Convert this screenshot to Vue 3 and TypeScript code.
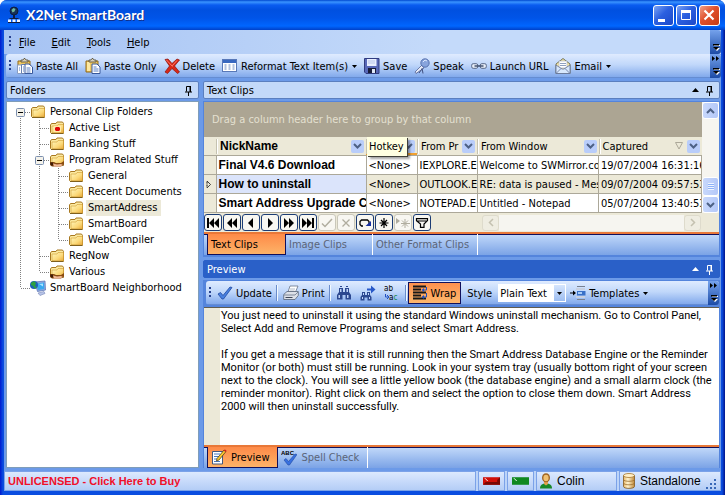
<script setup lang="ts">
import { ref } from 'vue'

type Guide = 'pipe' | 'tee' | 'end' | 'none' | 'open'
interface TreeRow {
  label: string
  icon: string
  guides: Guide[]
}
interface ToolItem {
  label: string
  icon: string
  menu?: boolean
}
interface Clip {
  name: string
  hotkey: string
  program: string
  source: string
  captured: string
}
interface NavButton {
  label: string
  icon: string
  disabled?: boolean
}

const menus: string[] = ['File', 'Edit', 'Tools', 'Help']

const tools: ToolItem[] = [
  { label: 'Paste All', icon: 'paste-all' },
  { label: 'Paste Only', icon: 'paste' },
  { label: 'Delete', icon: 'delete' },
  { label: 'Reformat Text Item(s)', icon: 'reformat', menu: true },
  { label: 'Save', icon: 'save' },
  { label: 'Speak', icon: 'speak' },
  { label: 'Launch URL', icon: 'link' },
  { label: 'Email', icon: 'email', menu: true },
]

const tree: TreeRow[] = [
  { label: 'Personal Clip Folders', icon: 'folder', guides: ['open'] },
  { label: 'Active List', icon: 'folder-active', guides: ['pipe', 'tee'] },
  { label: 'Banking Stuff', icon: 'folder', guides: ['pipe', 'tee'] },
  { label: 'Program Related Stuff', icon: 'folder-shared', guides: ['pipe', 'open'] },
  { label: 'General', icon: 'folder', guides: ['pipe', 'pipe', 'tee'] },
  { label: 'Recent Documents', icon: 'folder', guides: ['pipe', 'pipe', 'tee'] },
  { label: 'SmartAddress', icon: 'folder', guides: ['pipe', 'pipe', 'tee'] },
  { label: 'SmartBoard', icon: 'folder', guides: ['pipe', 'pipe', 'tee'] },
  { label: 'WebCompiler', icon: 'folder', guides: ['pipe', 'pipe', 'end'] },
  { label: 'RegNow', icon: 'folder', guides: ['pipe', 'tee'] },
  { label: 'Various', icon: 'folder-shared', guides: ['pipe', 'end'] },
  { label: 'SmartBoard Neighborhood', icon: 'network', guides: ['end'] },
]
const selectedFolder = ref('SmartAddress')

const clips: Clip[] = [
  { name: 'Final V4.6 Download', hotkey: '<None>', program: 'IEXPLORE.E', source: 'Welcome to SWMirror.co', captured: '19/07/2004 16:31:16' },
  { name: 'How to uninstall', hotkey: '<None>', program: 'OUTLOOK.E', source: 'RE: data is paused - Mes', captured: '09/07/2004 09:57:53' },
  { name: 'Smart Address Upgrade C', hotkey: '<None>', program: 'NOTEPAD.E', source: 'Untitled - Notepad', captured: '05/07/2004 13:40:53' },
]
const currentClip = ref(1)

const navButtons: NavButton[] = [
  { label: 'First', icon: 'nav-first' },
  { label: 'Previous page', icon: 'nav-prevpage' },
  { label: 'Previous', icon: 'nav-prev' },
  { label: 'Next', icon: 'nav-next' },
  { label: 'Next page', icon: 'nav-nextpage' },
  { label: 'Last', icon: 'nav-last' },
  { label: 'Post', icon: 'nav-post', disabled: true },
  { label: 'Cancel', icon: 'nav-cancel', disabled: true },
  { label: 'Refresh', icon: 'nav-refresh' },
  { label: 'Bookmark', icon: 'nav-star' },
  { label: 'Go to bookmark', icon: 'nav-goto', disabled: true },
  { label: 'Filter', icon: 'nav-filter' },
]

const wrap = ref(true)
const style = ref('Plain Text')
const body = ref(
  'You just need to uninstall it using the standard Windows uninstall mechanism. Go to Control Panel, Select Add and Remove Programs and select Smart Address.\n\n' +
    'If you get a message that it is still running then the Smart Address Database Engine or the Reminder Monitor (or both) must still be running. Look in your system tray (usually bottom right of your screen next to the clock). You will see a little yellow book (the database engine) and a small alarm clock (the reminder monitor). Right click on them and select the option to close them down. Smart Address 2000 will then uninstall successfully.',
)
</script>

<template>
  <svg class="sprite" aria-hidden="true">
    <defs>
      <linearGradient id="gFolder" x1="0" y1="0" x2="1" y2="1">
        <stop offset="0" stop-color="#fff8c0" />
        <stop offset="0.6" stop-color="#fbd878" />
        <stop offset="1" stop-color="#e8a838" />
      </linearGradient>
      <linearGradient id="gDb" x1="0" y1="0" x2="1" y2="0">
        <stop offset="0" stop-color="#e8b868" />
        <stop offset="0.4" stop-color="#fff4d0" />
        <stop offset="1" stop-color="#c08838" />
      </linearGradient>
    </defs>
    <symbol id="folder" viewBox="0 0 16 16">
      <path d="M1.500 12.500V5l1-1.500h4.500l1-1.500h5.500l1 1.500v9.500l-1 .5h-11z" fill="#fbe9a0" stroke="#a87820" />
      <path d="M3 12.500V6h5l1-1.500h5.500v8.500z" fill="url(#gFolder)" stroke="#d09a30" stroke-width=".6" />
      <path d="M2 13.500h12.500" stroke="#80601c" />
    </symbol>
    <symbol id="folder-active" viewBox="0 0 16 16">
      <use href="#folder" />
      <rect x="5" y="6" width="7" height="6" fill="#ffe9a8" />
      <path d="M7 7h3l1 1v2l-1 1h-3l-1-1v-2z" fill="#e00808" />
    </symbol>
    <symbol id="folder-shared" viewBox="0 0 16 16">
      <use href="#folder" />
      <path d="M1 10h4l2 1h5l3-2v3.500l-3 2H3l-2-1.500z" fill="#8a4c10" />
      <path d="M4 11.500l4 1 4-.5 2 1-3 1.500H5z" fill="#f0b898" />
      <path d="M1 10.500h3v3H2z" fill="#401c08" />
    </symbol>
    <symbol id="network" viewBox="0 0 16 16">
      <path d="M5 2l10-1 .5 9-8 1.500z" fill="#90a8e0" stroke="#6078b8" stroke-width=".8" />
      <path d="M7 3.500l7-1 .3 6.500-6.500 1z" fill="#38a8f0" />
      <path d="M9 4l4-.5v3z" fill="#a8e4ff" />
      <path d="M8 13l6-1.500 1 2-5 2z" fill="#b8c4e8" stroke="#7888b8" stroke-width=".6" />
      <circle cx="4" cy="5" r="4" fill="#1c60b8" />
      <path d="M1 3l3-2 2 2-1 3 2 1-2 2-2-3-2-1z" fill="#2ca040" />
    </symbol>
    <symbol id="paste" viewBox="0 0 16 16">
      <path d="M1 3h12v11H1z" fill="#f0c860" stroke="#906818" />
      <path d="M2 4h3v9H2z" fill="#fde8a0" />
      <path d="M4 4V2h2l1-1.500h1L9 2h2v2z" fill="#d8d0b8" stroke="#504830" stroke-width=".8" />
      <path d="M7 6h5l3 3v6.500H7z" fill="#fff" stroke="#38589c" />
      <path d="M8.500 9h3M8.500 11h5M8.500 13h5" stroke="#5880c8" />
    </symbol>
    <symbol id="paste-all" viewBox="0 0 16 16">
      <path d="M1 3h12v8H1z" fill="#f0c860" stroke="#906818" />
      <path d="M4 4V2h2l1-1.500h1L9 2h2v2z" fill="#d8d0b8" stroke="#504830" stroke-width=".8" />
      <path d="M.5 7h5v8.500h-5z" fill="#fff" stroke="#889cc0" />
      <path d="M4.500 6.500h5v9h-5z" fill="#fff" stroke="#6880b0" />
      <path d="M8 6h4l3.500 3v6.500H8z" fill="#fff" stroke="#38589c" />
      <path d="M9.500 10h4M9.500 12h4M9.500 14h4M6 9h1M6 11h1M6 13h1M2 10h1M2 12h1" stroke="#5880c8" />
    </symbol>
    <symbol id="delete" viewBox="0 0 16 16">
      <path d="M1 1.500l3-.5 4 4.500L13 1l2.500 1L10.500 8l5 6-2 1.500L8 10.500l-4.500 5L1 14l4.500-6z" fill="#d82818" stroke="#8c1008" stroke-width=".7" />
      <path d="M2.500 2l6 6.500M8 8l5-5.500" stroke="#ff8070" stroke-width=".9" fill="none" />
    </symbol>
    <symbol id="reformat" viewBox="0 0 16 16">
      <rect x=".5" y="1.500" width="14" height="12" fill="#fff" stroke="#5878b8" />
      <path d="M1 2h13v3H1z" fill="#3868c0" />
      <path d="M2.500 7h2M6.500 7h2M10.500 7h2M2.500 9h2M6.500 9h2M10.500 9h2M2.500 11h2M6.500 11h2M10.500 11h2" stroke="#6888c0" />
    </symbol>
    <symbol id="save" viewBox="0 0 16 16">
      <path d="M.5.500h14.500v15H2L.5 14z" fill="#5868b8" stroke="#303c80" />
      <path d="M3 1h9.500v7H3z" fill="#e8eeff" />
      <path d="M4 3h7M4 5h7" stroke="#b8c4e8" />
      <path d="M4 10h8v5H4z" fill="#181c38" />
      <path d="M8 11h3v4H8z" fill="#e0e8f8" />
    </symbol>
    <symbol id="speak" viewBox="0 0 16 16">
      <path d="M8 7L1 14l1 1.500L10 10z" fill="#e8ecf8" stroke="#506090" stroke-width=".8" />
      <path d="M8 10l1 5.500M5 15l3-4" stroke="#405080" fill="none" />
      <circle cx="11" cy="5" r="4.200" fill="#88a4dc" stroke="#4460a0" stroke-width=".8" />
      <path d="M9 4l2-2 2 1" stroke="#dce8ff" fill="none" />
    </symbol>
    <symbol id="link" viewBox="0 0 16 16">
      <rect x=".7" y="5.700" width="6" height="4.600" rx="1.500" fill="#e8eef8" stroke="#586888" />
      <rect x="9.300" y="5.700" width="6" height="4.600" rx="1.500" fill="#e8eef8" stroke="#586888" />
      <path d="M3.500 8h9" stroke="#384868" stroke-width="1.400" />
    </symbol>
    <symbol id="email" viewBox="0 0 16 16">
      <path d="M1 6l7-5.500L15 6v9.500H1z" fill="#f8e8a8" stroke="#686848" stroke-width=".9" />
      <path d="M4 3h8v7H4z" fill="#fff" stroke="#a0a8b8" stroke-width=".6" />
      <path d="M5 5.500h6M5 7.500h6" stroke="#90a0c0" />
      <path d="M1 7l6 4h2l6-4v8.500H1z" fill="#d8e8fc" stroke="#607098" stroke-width=".8" />
      <path d="M1.500 15L6 10.500M14.500 15L10 10.500" stroke="#607098" stroke-width=".8" />
    </symbol>
    <symbol id="check" viewBox="0 0 16 16">
      <path d="M1 9l2.500-1.500L6 10.500 13 2l2 .5L6.500 14H5z" fill="#4880e0" stroke="#2048a0" stroke-width=".8" />
    </symbol>
    <symbol id="print" viewBox="0 0 16 16">
      <path d="M5 7l2-6h8l-2.500 6z" fill="#fff" stroke="#687488" stroke-width=".8" />
      <path d="M7 4h5M6.500 6h5" stroke="#a0a8b8" stroke-width=".8" />
      <path d="M.7 9.500L4 6.500h11.300v4L12 14.500H.7z" fill="#dce0e8" stroke="#586478" stroke-width=".8" />
      <path d="M1 10h11l3-3" stroke="#687488" stroke-width=".8" fill="none" />
      <path d="M2.500 12.500h7" stroke="#404858" />
    </symbol>
    <symbol id="find" viewBox="0 0 16 16">
      <path d="M3 3h4v4h2V3h4v4l2 3v4.500h-5.500V10h-3v4.500H1V10l2-3z" fill="#2c4890" />
      <path d="M4 4h1.500v3H4zM10.500 4H12v3h-1.500zM2.500 10H4v3H2.500zM11 10h1.500v3H11z" fill="#c0d4f8" />
      <path d="M4 1.500h2M10 1.500h2" stroke="#2c4890" />
    </symbol>
    <symbol id="find-next" viewBox="0 0 16 16">
      <path d="M2 7h3v3h2V7h3v3l1.500 2v3.500H7.500V12.500H4.500v3H.5V12L2 10z" fill="#2c4890" />
      <path d="M3 8h1v2H3zM8 8h1v2H8zM2 12h1v2H2zM9 12h1v2H9z" fill="#c0d4f8" />
      <path d="M7 3.500h4V.500l4.500 4-4.500 4V5.500H7z" fill="#2858c8" />
    </symbol>
    <symbol id="wrap" viewBox="0 0 16 16">
      <path d="M1 1.500h13M1 4.500h8M1 7.500h13M1 10.500h8M1 13.500h13" stroke="#181818" stroke-width="2" />
      <path d="M14.500 2v3h-3M14.500 8v4h-3" stroke="#2050c0" fill="none" />
      <path d="M12 3v4l-2.500-2zM12 10v4l-2.500-2z" fill="#2050c0" />
    </symbol>
    <symbol id="templates" viewBox="0 0 16 16">
      <path d="M0 8h4" stroke="#000" />
      <path d="M3 5.500L6 8 3 10.500z" fill="#000" />
      <path d="M7 1.500h8M7 14.500h8" stroke="#788090" />
      <path d="M6 3h9v2H6zM6 11h9v2H6z" fill="#c8d0e0" />
      <path d="M7 6h8.500v4.500H7z" fill="#3870c8" />
      <path d="M8 7h4v2H8z" fill="#a8ccf8" />
    </symbol>
    <symbol id="note" viewBox="0 0 16 16">
      <path d="M1.500 2.500h10v12.500h-10z" fill="#fff" stroke="#405880" />
      <path d="M3 5h6M3 7.500h5M3 10h3M3 12.500h6" stroke="#4878c0" />
      <path d="M13 1l2 1.500L8 11l-2.500 1L6 9.500z" fill="#f8c830" stroke="#403010" stroke-width=".7" />
      <path d="M12.500 1.500l2 1.500 1-1.500-1.500-1z" fill="#d02020" />
    </symbol>
    <symbol id="person" viewBox="0 0 12 16">
      <path d="M0 15.500c0-3.500 2-5 6-5s6 1.500 6 5z" fill="#188828" />
      <path d="M4 8h4v3L6 12.500 4 11z" fill="#e0a050" />
      <ellipse cx="6" cy="4.800" rx="4" ry="4.500" fill="#a06420" />
      <ellipse cx="6" cy="5" rx="2.600" ry="3.200" fill="#f0c070" />
    </symbol>
    <symbol id="database" viewBox="0 0 12 16">
      <path d="M.5 2.500v11c0 2.500 11 2.500 11 0v-11z" fill="url(#gDb)" stroke="#805820" stroke-width=".8" />
      <ellipse cx="6" cy="2.500" rx="5.500" ry="2" fill="#fff0c8" stroke="#a87830" stroke-width=".8" />
      <path d="M.5 6.500c0 2.400 11 2.400 11 0M.5 10c0 2.400 11 2.400 11 0" stroke="#a07030" stroke-width=".8" fill="none" />
    </symbol>
    <symbol id="app-logo" viewBox="0 0 12 18">
      <circle cx="6" cy="5" r="4" fill="#183058" stroke="#0c1830" stroke-width=".8" />
      <path d="M3.500 4l2-2 2 1-1 2.500-2 1z" fill="#70b8a0" />
      <path d="M5 9h2v3H5zM1.500 12h9v1h-9z" fill="#101c40" />
      <path d="M0 13.500h3v2.500H0zM4.500 13.500h3v2.500h-3zM9 13.500h3v2.500H9z" fill="#f0f4ff" />
      <path d="M0 16.500h12" stroke="#101c40" />
    </symbol>
    <symbol id="pin" viewBox="0 0 9 11">
      <path d="M2.500 6.500v-5h4v5M1 7h7M4.500 7v4" fill="none" stroke="currentColor" />
      <path d="M5.500 1h1.500v6H5.500z" fill="currentColor" />
    </symbol>
    <symbol id="up" viewBox="0 0 7 4"><path d="M0 4L3.500 0 7 4z" fill="currentColor" /></symbol>
    <symbol id="down" viewBox="0 0 5 3"><path d="M0 0h5L2.500 3z" fill="currentColor" /></symbol>
    <symbol id="chev-down" viewBox="0 0 9 6"><path d="M1 1l3.500 3.500L8 1" fill="none" stroke="currentColor" stroke-width="2" /></symbol>
    <symbol id="chev-up" viewBox="0 0 9 6"><path d="M1 5l3.500-3.500L8 5" fill="none" stroke="currentColor" stroke-width="2" /></symbol>
    <symbol id="chev-left" viewBox="0 0 6 9"><path d="M5 1L1.500 4.500 5 8" fill="none" stroke="currentColor" stroke-width="1.500" /></symbol>
    <symbol id="chev-right" viewBox="0 0 6 9"><path d="M1 1l3.500 3.500L1 8" fill="none" stroke="currentColor" stroke-width="1.500" /></symbol>
    <symbol id="nav-first" viewBox="0 0 14 10"><path d="M1 0h2v10H1zM3 5l5-5v10zM8 5l5-5v10z" /></symbol>
    <symbol id="nav-prevpage" viewBox="0 0 14 10"><path d="M2 5l5-5v10zM7 5l5-5v10z" /></symbol>
    <symbol id="nav-prev" viewBox="0 0 14 10"><path d="M4 5l5-5v10z" /></symbol>
    <symbol id="nav-next" viewBox="0 0 14 10"><path d="M10 5L5 0v10z" /></symbol>
    <symbol id="nav-nextpage" viewBox="0 0 14 10"><path d="M7 5L2 0v10zM12 5L7 0v10z" /></symbol>
    <symbol id="nav-last" viewBox="0 0 14 10"><path d="M11 0h2v10h-2zM11 5L6 0v10zM6 5L1 0v10z" /></symbol>
    <symbol id="nav-post" viewBox="0 0 14 10"><path d="M2 5.500L5 8.500 12 1" fill="none" stroke="currentColor" stroke-width="1.500" /></symbol>
    <symbol id="nav-cancel" viewBox="0 0 14 10"><path d="M3.500 1.500l7 7M10.500 1.500l-7 7" fill="none" stroke="currentColor" stroke-width="1.300" /></symbol>
    <symbol id="nav-refresh" viewBox="0 0 14 10">
      <path d="M5 8H3.500L2 6.500v-3L3.500 2h6L11 3.500V6" fill="none" stroke="currentColor" stroke-width="1.300" />
      <path d="M7.500 8H13V3z" fill="#1830a0" />
    </symbol>
    <symbol id="nav-star" viewBox="0 0 14 10"><path d="M7 0v10M2.500 5h9M4 2l6 6M10 2L4 8" fill="none" stroke="currentColor" stroke-width="1.200" /></symbol>
    <symbol id="nav-goto" viewBox="0 0 14 10">
      <path d="M0 0l4 3-4 3z" />
      <path d="M9 1v9M5 5.500h9M6 2.500l6 6M12 2.500l-6 6" fill="none" stroke="currentColor" />
    </symbol>
    <symbol id="nav-filter" viewBox="0 0 14 10">
      <path d="M1.500.600h11v2L9 6v3.400H5.500V6l-4-3.400z M2 3h10" fill="none" stroke="currentColor" stroke-width="1.200" />
    </symbol>
    <symbol id="overflow" viewBox="0 0 8 8">
      <path d="M2 2h6v1H2zM2 5h6L5 8z" fill="#fff" />
      <path d="M1 1h6v1.500H1zM1 4h6L4 7z" fill="#000" />
    </symbol>
    <symbol id="more" viewBox="0 0 8 5"><path d="M0 0l3 2.500L0 5zM4 0l3 2.500L4 5z" /></symbol>
  </svg>

  <div class="window">
    <header class="titlebar">
      <svg class="app-icon"><use href="#app-logo" /></svg>
      <h1>X2Net SmartBoard</h1>
      <div class="controls">
        <button class="ctl" aria-label="Minimize"><svg viewBox="0 0 19 19"><path d="M4 13h7v3H4z" fill="#fff" /></svg></button>
        <button class="ctl" aria-label="Maximize">
          <svg viewBox="0 0 19 19"><path d="M4.500 5.500h9v8h-9z" fill="none" stroke="#fff" /><path d="M4 4h10v3H4z" fill="#fff" /></svg>
        </button>
        <button class="ctl close" aria-label="Close">
          <svg viewBox="0 0 19 19"><path d="M4.500 4.500l9 9M13.500 4.500l-9 9" stroke="#fff" stroke-width="2.200" /></svg>
        </button>
      </div>
    </header>

    <div class="client">
      <nav class="menubar" aria-label="Main menu">
        <span class="grip"></span>
        <button v-for="m in menus" :key="m" class="menu"><u>{{ m[0] }}</u>{{ m.slice(1) }}</button>
        <button class="overflow" aria-label="Menu options"><svg class="i-ovf"><use href="#overflow" /></svg></button>
      </nav>

      <div class="toolbar" role="toolbar" aria-label="Standard">
        <span class="grip"></span>
        <button v-for="t in tools" :key="t.label" class="tool">
          <svg class="icon"><use :href="'#' + t.icon" /></svg>
          <span>{{ t.label }}</span>
          <svg v-if="t.menu" class="i-down"><use href="#down" /></svg>
        </button>
        <button class="overflow" aria-label="Toolbar options">
          <svg class="i-more"><use href="#more" /></svg>
          <svg class="i-ovf"><use href="#overflow" /></svg>
        </button>
      </div>

      <main class="docks">
        <section class="dock">
          <div class="caption">
            <h2>Folders</h2>
            <button aria-label="Pin folders"><svg class="i-pin"><use href="#pin" /></svg></button>
          </div>
          <ul class="tree">
            <li v-for="row in tree" :key="row.label" class="tree-row" @click="selectedFolder = row.label">
              <svg v-for="(g, i) in row.guides" :key="i" class="guide" viewBox="0 0 19 16">
                <path v-if="g === 'pipe' || g === 'tee'" class="dots" d="M9.500 0v16" />
                <path v-if="g === 'end'" class="dots" d="M9.500 0v8" />
                <path v-if="g === 'open' && i > 0" class="dots" d="M9.500 0v16" />
                <path v-if="g === 'open' && i === 0" class="dots" d="M9.500 12v4" />
                <path v-if="g !== 'pipe'" class="dots" d="M10 8.500h9" />
                <g v-if="g === 'open'">
                  <rect x="5.500" y="4.500" width="8" height="8" rx="1" fill="#f4f2ea" stroke="#7b8fae" />
                  <path d="M7 8.500h5" stroke="#000" />
                </g>
              </svg>
              <svg class="icon"><use :href="'#' + row.icon" /></svg>
              <span class="tree-label" :class="{ selected: row.label === selectedFolder }">{{ row.label }}</span>
            </li>
          </ul>
        </section>

        <div class="column">
          <section class="dock">
            <div class="caption">
              <h2>Text Clips</h2>
              <button aria-label="Collapse clips"><svg class="i-up"><use href="#up" /></svg></button>
              <button aria-label="Pin clips"><svg class="i-pin"><use href="#pin" /></svg></button>
            </div>
            <div class="clips">
              <div class="grid-area">
                <div class="grid-main">
                  <div class="group-panel">Drag a column header here to group by that column</div>
                  <table class="grid">
                    <colgroup>
                      <col class="c-ind" /><col class="c-name" /><col class="c-hot" /><col class="c-prog" /><col /><col class="c-cap" />
                    </colgroup>
                    <thead>
                      <tr>
                        <th></th>
                        <th class="strong"><div class="th"><span>NickName</span><button class="drop" aria-label="Filter NickName"><svg class="i-chev"><use href="#chev-down" /></svg></button></div></th>
                        <th class="hot">
                          <div class="th end"><button class="drop" aria-label="Filter Hotkey"><svg class="i-chev"><use href="#chev-down" /></svg></button></div>
                          <span class="tip">Hotkey</span>
                        </th>
                        <th><div class="th"><span>From Pr</span><button class="drop" aria-label="Filter From Program"><svg class="i-chev"><use href="#chev-down" /></svg></button></div></th>
                        <th><div class="th"><span>From Window</span><button class="drop" aria-label="Filter From Window"><svg class="i-chev"><use href="#chev-down" /></svg></button></div></th>
                        <th>
                          <div class="th">
                            <span>Captured</span>
                            <svg class="i-sort" viewBox="0 0 8 8"><path d="M.5.500h7L4 7z" fill="none" stroke="#aca899" /></svg>
                            <button class="drop" aria-label="Filter Captured"><svg class="i-chev"><use href="#chev-down" /></svg></button>
                          </div>
                        </th>
                      </tr>
                    </thead>
                    <tbody>
                      <tr v-for="(c, i) in clips" :key="c.name" :class="{ current: i === currentClip }" @click="currentClip = i">
                        <td class="ind">
                          <svg v-if="i === currentClip" class="i-cur" viewBox="0 0 6 9"><path d="M1 1l3.500 3.500L1 8z" fill="none" stroke="#000" stroke-dasharray="1 .5" /></svg>
                        </td>
                        <td class="strong">{{ c.name }}</td>
                        <td>{{ c.hotkey }}</td>
                        <td>{{ c.program }}</td>
                        <td>{{ c.source }}</td>
                        <td>{{ c.captured }}</td>
                      </tr>
                    </tbody>
                  </table>
                </div>
                <div class="vscroll">
                  <button class="sb" aria-label="Scroll up"><svg class="i-chev"><use href="#chev-up" /></svg></button>
                  <span class="track"></span>
                  <span class="sb thumb"></span>
                  <button class="sb" aria-label="Scroll down"><svg class="i-chev"><use href="#chev-down" /></svg></button>
                </div>
              </div>
              <div class="navigator">
                <button v-for="n in navButtons" :key="n.icon" class="nav" :disabled="n.disabled" :aria-label="n.label">
                  <svg class="i-nav"><use :href="'#' + n.icon" /></svg>
                </button>
                <div class="hscroll">
                  <button class="sb off" disabled aria-label="Scroll left"><svg class="i-side"><use href="#chev-left" /></svg></button>
                  <span class="track"></span>
                  <button class="sb off" disabled aria-label="Scroll right"><svg class="i-side"><use href="#chev-right" /></svg></button>
                </div>
              </div>
              <div class="tabs" role="tablist">
                <button class="tab active wide" role="tab" aria-selected="true">Text Clips</button>
                <button class="tab wide" role="tab" aria-selected="false">Image Clips</button>
                <button class="tab" role="tab" aria-selected="false">Other Format Clips</button>
              </div>
            </div>
          </section>

          <section class="dock grow">
            <div class="caption focused">
              <h2>Preview</h2>
              <button aria-label="Collapse preview"><svg class="i-up"><use href="#up" /></svg></button>
              <button aria-label="Pin preview"><svg class="i-pin"><use href="#pin" /></svg></button>
            </div>
            <div class="preview">
              <div class="toolbar" role="toolbar" aria-label="Preview">
                <span class="grip"></span>
                <button class="tool"><svg class="icon"><use href="#check" /></svg><span>Update</span></button>
                <i class="sep"></i>
                <button class="tool"><svg class="icon"><use href="#print" /></svg><span>Print</span></button>
                <i class="sep"></i>
                <button class="tool bare" aria-label="Find"><svg class="icon"><use href="#find" /></svg></button>
                <button class="tool bare" aria-label="Find next"><svg class="icon"><use href="#find-next" /></svg></button>
                <button class="tool bare" aria-label="Replace">
                  <svg class="icon" viewBox="0 0 16 16">
                    <text x="0" y="6" class="glyph">ab</text>
                    <text x="5" y="15" class="glyph">a<tspan fill="#188850">c</tspan></text>
                    <path d="M1.500 9v3h2.500M3 10l2 2-2 2" fill="none" stroke="#2050c0" />
                  </svg>
                </button>
                <i class="sep"></i>
                <button class="tool pressed" :aria-pressed="wrap" @click="wrap = !wrap"><svg class="icon"><use href="#wrap" /></svg><span>Wrap</span></button>
                <label class="style-label" for="style">Style</label>
                <span class="combo">
                  <select id="style" v-model="style"><option>Plain Text</option></select>
                  <span class="combo-arrow"><svg class="i-down"><use href="#down" /></svg></span>
                </span>
                <button class="tool"><svg class="icon"><use href="#templates" /></svg><span>Templates</span><svg class="i-down"><use href="#down" /></svg></button>
                <button class="overflow" aria-label="Preview toolbar options">
                  <svg class="i-more"><use href="#more" /></svg>
                  <svg class="i-ovf"><use href="#overflow" /></svg>
                </button>
              </div>
              <textarea v-model="body" class="editor" aria-label="Clip text" spellcheck="false"></textarea>
              <div class="tabs" role="tablist">
                <button class="tab active" role="tab" aria-selected="true"><svg class="icon"><use href="#note" /></svg>Preview</button>
                <button class="tab" role="tab" aria-selected="false">
                  <svg class="icon" viewBox="0 0 16 16">
                    <text x="0" y="5" class="abc">ABC</text>
                    <path d="M3 10l2-1.500L7.500 11.500 14 4l2 .5L8.500 15H7z" fill="#3870e0" stroke="#2048a0" stroke-width=".6" />
                  </svg>Spell Check
                </button>
              </div>
            </div>
          </section>
        </div>
      </main>

      <footer class="status">
        <a class="cell main" href="#buy">UNLICENSED - Click Here to Buy</a>
        <span class="cell lamp"><svg viewBox="0 0 18 8"><rect width="18" height="8" fill="#d01008" /><path d="M0 8l3-3h12l3 3zM18 0v8l-3-3V3z" fill="#780804" /><path d="M2 1l3 3" stroke="#fff" /></svg></span>
        <span class="cell lamp"><svg viewBox="0 0 18 8"><rect width="18" height="8" fill="#108820" /><path d="M2 1l3 3" stroke="#fff" /></svg></span>
        <span class="cell user"><svg class="i-status"><use href="#person" /></svg>Colin</span>
        <span class="cell mode"><svg class="i-status"><use href="#database" /></svg>Standalone
          <svg class="resize" viewBox="0 0 11 11"><path d="M8 0h2v2H8zM4 4h2v2H4zM8 4h2v2H8zM0 8h2v2H0zM4 8h2v2H4zM8 8h2v2H8z" fill="#3868b8" /></svg>
        </span>
      </footer>
    </div>
  </div>
</template>

<style>
body {
  margin: 0;
  background: #fff;
}
</style>

<style scoped>
.sprite {
  position: absolute;
  width: 0;
  height: 0;
}
.window {
  display: flex;
  flex-direction: column;
  box-sizing: border-box;
  min-height: 100vh;
  padding: 0 4px 4px;
  background: linear-gradient(90deg, #0019cf, #0a4de0 3px, #0a4de0 calc(100% - 3px), #00138c);
  border-radius: 7px 7px 0 0;
  overflow: hidden;
  font: 11px/13px 'DejaVu Sans Condensed', 'DejaVu Sans', sans-serif;
  color: #000;
}
button {
  font: inherit;
  color: inherit;
  margin: 0;
  padding: 0;
  border: 0;
  background: none;
}
h1,
h2 {
  margin: 0;
  font-size: inherit;
  font-weight: normal;
}
svg {
  flex: none;
  display: block;
}
.icon {
  width: 16px;
  height: 16px;
}
.titlebar {
  display: flex;
  align-items: center;
  gap: 6px;
  height: 30px;
  margin: 0 -4px;
  padding: 0 5px 0 8px;
  box-sizing: border-box;
  background: linear-gradient(180deg, #0048d0 0, #3a94ff 2px, #0a5cf0 5px, #0050e0 10px, #0054e8 18px, #0066ff 26px, #0040c8 30px);
}
.titlebar h1 {
  flex: 1;
  color: #fff;
  font: bold 14px/18px Lato, sans-serif;
  text-shadow: 1px 1px 0 #10308c;
}
.app-icon {
  width: 12px;
  height: 18px;
}
.controls {
  display: flex;
  gap: 2px;
}
.ctl {
  width: 21px;
  height: 21px;
  border: 1px solid #fff;
  border-radius: 3px;
  background: linear-gradient(135deg, #7ca4f4, #2c60e0 45%, #1c48c8);
}
.ctl.close {
  background: linear-gradient(135deg, #f0a088, #e0502c 45%, #c83c14);
}
.client {
  flex: 1;
  display: flex;
  flex-direction: column;
  background: #6c9ae8;
}
.menubar {
  display: flex;
  align-items: center;
  height: 24px;
  padding-left: 4px;
  background: linear-gradient(90deg, #a6c3f3, #c4dafa 60%);
}
.grip {
  width: 2px;
  height: 12px;
  margin: 0 2px 0 1px;
  background: repeating-linear-gradient(180deg, #27418f 0, #27418f 2px, transparent 2px, transparent 4px);
}
.menu {
  margin-right: 4px;
  padding: 3px 6px;
}
.overflow {
  display: flex;
  flex-direction: column;
  align-items: center;
  justify-content: flex-end;
  align-self: stretch;
  gap: 6px;
  width: 11px;
  margin-left: auto;
  padding-bottom: 3px;
  background: linear-gradient(180deg, #75a2ec, #1c4ba6);
  border-radius: 0 3px 3px 0;
}
.i-ovf {
  width: 8px;
  height: 8px;
}
.i-more {
  width: 8px;
  height: 5px;
}
.toolbar {
  display: flex;
  align-items: center;
  height: 24px;
  margin-left: 2px;
  padding-left: 2px;
  background: linear-gradient(180deg, #dfebff, #c0d7fa 45%, #83aaec 95%, #5078c0);
  border-radius: 3px;
}
.tool {
  display: flex;
  align-items: center;
  gap: 3px;
  height: 22px;
  padding: 0 3px 0 4px;
  white-space: nowrap;
}
.tool.bare {
  padding: 0 4px;
}
.i-down {
  width: 5px;
  height: 3px;
  margin-left: 1px;
}
.sep {
  width: 1px;
  height: 16px;
  margin: 0 1px;
  background: #6a8ccb;
  border-right: 1px solid #f1f9ff;
}
.docks {
  flex: 1;
  display: grid;
  grid-template-columns: 193px minmax(0, 1fr);
  gap: 4px;
  padding: 3px 1px 3px 2px;
}
.column {
  display: flex;
  flex-direction: column;
  gap: 3px;
}
.dock {
  display: flex;
  flex-direction: column;
  gap: 2px;
}
.grow {
  flex: 1;
}
.caption {
  display: flex;
  align-items: center;
  gap: 6px;
  height: 18px;
  box-sizing: border-box;
  padding: 0 5px 0 3px;
  background: #c3d9f9;
  border: 1px solid #5b7fbf;
  border-radius: 2px;
}
.caption h2 {
  flex: 1;
}
.caption.focused {
  color: #fff;
  background: #2a60c8;
  border-color: #2a60c8;
}
.i-pin {
  width: 9px;
  height: 11px;
}
.i-up {
  width: 7px;
  height: 4px;
}
.tree {
  flex: 1;
  margin: 0;
  padding: 2px 4px;
  list-style: none;
  background: #fff;
  border: 1px solid #7f9db9;
}
.tree-row {
  display: flex;
  align-items: center;
  height: 16px;
}
.guide {
  width: 19px;
  height: 16px;
}
.dots {
  stroke: #808080;
  stroke-dasharray: 1 1;
  fill: none;
}
.tree-label {
  margin-left: 2px;
  padding: 1px 4px 2px 2px;
  white-space: nowrap;
}
.tree-label.selected {
  background: #ece9d8;
}
.clips,
.preview {
  display: flex;
  flex-direction: column;
  padding: 1px 1px 2px;
  background: #5484dc;
}
.preview {
  flex: 1;
  padding-bottom: 0;
}
.preview .toolbar {
  margin: 0 0 2px 2px;
}
.grid-area {
  display: flex;
}
.grid-main {
  flex: 1;
  min-width: 0;
}
.group-panel {
  display: flex;
  align-items: center;
  height: 35px;
  padding-left: 8px;
  background: #aca593;
  color: #e4e0d0;
}
.grid {
  width: 100%;
  table-layout: fixed;
  border-collapse: collapse;
}
.c-ind {
  width: 12px;
}
.c-name {
  width: 150px;
}
.c-hot {
  width: 51px;
}
.c-prog {
  width: 60px;
}
.c-cap {
  width: 103px;
}
.grid th {
  position: relative;
  height: 18px;
  padding: 0;
  background: #ece9d8;
  border-bottom: 1px solid #aca899;
  font-weight: normal;
  text-align: left;
  white-space: nowrap;
}
.grid .strong {
  font: bold 12px/13px 'Liberation Sans', Arial, sans-serif;
}
.th {
  display: flex;
  align-items: center;
  gap: 4px;
  height: 15px;
  padding: 0 2px 0 3px;
  border-left: 1px solid #c5c2b0;
  box-shadow: inset 1px 0 #fff;
}
.th span {
  flex: 1;
}
.th.end {
  justify-content: flex-end;
}
.hot {
  box-shadow: inset 0 -2px #f0a030;
}
.drop {
  display: flex;
  align-items: center;
  justify-content: center;
  width: 13px;
  height: 13px;
  background: #b9cdfa;
  border-radius: 2px;
  color: #4d6185;
}
.i-chev {
  width: 9px;
  height: 6px;
}
.i-sort {
  width: 8px;
  height: 8px;
}
.tip {
  position: absolute;
  top: 0;
  left: 1px;
  padding: 3px 3px 3px 2px;
  background: #ffffe1;
  box-shadow: 1px 1px 0 #404038, 3px 3px 2px rgba(0, 0, 0, 0.35);
}
.grid td {
  height: 18px;
  padding: 0 0 0 2px;
  background: #fff;
  border: 1px solid #aca899;
  border-width: 0 1px 1px 0;
  overflow: hidden;
  white-space: nowrap;
}
.grid .current td {
  background: #ece9d8;
}
.grid .current .strong {
  background: #dbe4fb;
}
.grid td.ind,
.grid .current td.ind {
  background: #ece9d8;
}
.i-cur {
  width: 6px;
  height: 9px;
}
.vscroll {
  display: flex;
  flex-direction: column;
  width: 17px;
  background: #f4f3ee;
}
.track {
  flex: 1;
  background: #f6f5f0;
}
.sb {
  display: flex;
  align-items: center;
  justify-content: center;
  width: 17px;
  height: 17px;
  box-sizing: border-box;
  border: 1px solid #fff;
  border-radius: 3px;
  background: linear-gradient(90deg, #c8d8fc, #b4c8f8);
  color: #4d6185;
}
.thumb {
  height: 19px;
}
.thumb::before {
  content: '';
  width: 6px;
  height: 7px;
  background: repeating-linear-gradient(180deg, #eef4fe 0, #eef4fe 1px, #8cb0f8 1px, #8cb0f8 2px);
}
.sb.off {
  height: 16px;
  background: #efede2;
  border-color: #dedbcc;
  color: #c4c1b0;
}
.navigator {
  display: flex;
  align-items: center;
  gap: 1px;
  height: 19px;
  background: #ece9d8;
}
.nav {
  display: flex;
  align-items: center;
  justify-content: center;
  width: 18px;
  height: 17px;
  box-sizing: border-box;
  border: 1px solid #1c3c74;
  border-radius: 3px;
  background: #f8f7f2;
}
.nav:disabled {
  border-color: #c9c7ba;
  color: #b0ad9f;
  fill: #b0ad9f;
}
.i-nav {
  width: 14px;
  height: 10px;
}
.i-side {
  width: 6px;
  height: 9px;
}
.hscroll {
  flex: 1;
  display: flex;
  margin: 0 18px 0 50px;
}
.tabs {
  display: flex;
  height: 21px;
  padding-left: 3px;
  border-top: 2px solid #e87838;
  background: linear-gradient(180deg, #c3dafa, #7ba3e6);
  box-shadow: inset 0 1px #10105c;
}
.tab {
  display: flex;
  align-items: center;
  gap: 4px;
  box-sizing: border-box;
  padding: 0 8px 0 3px;
  color: #5a6478;
  border-right: 1px solid #fff;
}
.tab.wide {
  min-width: 79px;
}
.tab.wide + .wide {
  min-width: 87px;
}
.tab.active {
  color: #000;
  background: linear-gradient(180deg, #fe8a48, #fdb368);
  border: solid #10105c;
  border-width: 0 1px 1px;
}
.style-label {
  margin: 0 6px;
}
.combo {
  position: relative;
  display: flex;
  width: 68px;
  height: 18px;
  background: #fff;
}
.combo select {
  width: 100%;
  padding: 0 13px 0 2px;
  border: 0;
  appearance: none;
  background: none;
  font: inherit;
  color: inherit;
}
.combo-arrow {
  position: absolute;
  top: 1px;
  right: 1px;
  bottom: 1px;
  display: flex;
  align-items: center;
  padding: 0 3px 0 2px;
  background: linear-gradient(180deg, #d6e5fd, #9dbdf1);
  pointer-events: none;
}
.pressed {
  box-sizing: border-box;
  padding: 0 4px 0 3px;
  border: 1px solid #10105c;
  background: linear-gradient(180deg, #fe914e, #fdb76c);
}
.glyph {
  font: 8px 'DejaVu Sans Condensed', sans-serif;
}
.abc {
  font: bold 6px 'Liberation Sans', sans-serif;
}
.editor {
  flex: 1;
  display: block;
  box-sizing: border-box;
  width: 100%;
  margin: 0;
  padding: 1px 4px 0 17px;
  border: 0;
  border-top: 1px solid #605c50;
  outline: none;
  resize: none;
  overflow: hidden;
  background: linear-gradient(90deg, #ece9d8 16px, #fff 16px);
  font: 11px/13px Roboto, sans-serif;
  color: inherit;
}
.status {
  display: flex;
  gap: 2px;
  height: 20px;
  background: #bcd4f8;
  font: 12px/18px 'Liberation Sans', Arial, sans-serif;
}
.cell {
  display: flex;
  align-items: center;
  gap: 5px;
  box-sizing: border-box;
  padding: 0 3px;
  border: 1px solid #7ba2e8;
  background: linear-gradient(180deg, #dce9fe, #b4cdf6);
}
.cell.main {
  flex: 1;
  font-size: 11px;
  font-weight: bold;
  color: #f01028;
  text-decoration: none;
}
.lamp {
  justify-content: center;
  width: 27px;
}
.lamp svg {
  width: 17px;
  height: 8px;
}
.user {
  width: 81px;
}
.i-status {
  width: 12px;
  height: 16px;
}
.mode {
  width: 102px;
}
.resize {
  width: 11px;
  height: 11px;
  margin-left: auto;
  align-self: flex-end;
}
</style>
